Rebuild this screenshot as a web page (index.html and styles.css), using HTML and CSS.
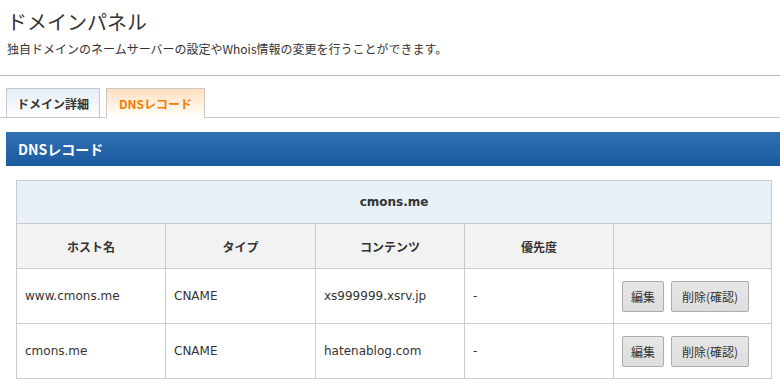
FILE: index.html
```html
<!DOCTYPE html>
<html lang="ja">
<head>
  <meta charset="UTF-8">
  <title>ドメインパネル</title>
  <link rel="stylesheet" href="styles.css">
</head>
<body>
  <div class="cabecera">
    <h1>ドメインパネル</h1>
    <p class="descripcion">独自ドメインのネームサーバーの設定やWhois情報の変更を行うことができます。</p>
  </div>

  <ul class="pestanas">
    <li class="pestana">ドメイン詳細</li>
    <li class="pestana activa">DNSレコード</li>
  </ul>

  <div class="seccion">
    <h2 class="barra">DNSレコード</h2>

    <table class="tabla">
      <colgroup>
        <col class="c1"><col class="c2"><col class="c3"><col class="c4"><col class="c5">
      </colgroup>
      <tr class="dominio">
        <th colspan="5">cmons.me</th>
      </tr>
      <tr class="titulos">
        <th>ホスト名</th>
        <th>タイプ</th>
        <th>コンテンツ</th>
        <th>優先度</th>
        <th></th>
      </tr>
      <tr>
        <td>www.cmons.me</td>
        <td>CNAME</td>
        <td>xs999999.xsrv.jp</td>
        <td>-</td>
        <td><button class="boton">編集</button><button class="boton">削除(確認)</button></td>
      </tr>
      <tr>
        <td>cmons.me</td>
        <td>CNAME</td>
        <td>hatenablog.com</td>
        <td>-</td>
        <td><button class="boton">編集</button><button class="boton">削除(確認)</button></td>
      </tr>
    </table>
  </div>
</body>
</html>
```

FILE: styles.css
```css
body {
  font-family: "DejaVu Sans", "Noto Sans CJK JP", sans-serif;
  margin: 0;
  background-color: #fff;
  color: #333;
  font-size: 12px;
}

.cabecera {
  padding: 10px 7px 17px;
  border-bottom: 1px solid #b9b9b9;
}

h1 {
  font-family: "Noto Sans CJK JP", sans-serif;
  font-size: 20px;
  font-weight: normal;
  line-height: 24px;
  margin: 0 0 6px;
  color: #333;
}

.descripcion {
  font-family: "Noto Sans CJK JP", sans-serif;
  margin: 0;
  line-height: 18px;
  font-size: 12px;
}

.pestanas {
  list-style: none;
  display: flex;
  gap: 6px;
  margin: 12px 0 0;
  padding: 0 0 0 6px;
  border-bottom: 1px solid #c8c8c8;
}

.pestana {
  font-family: "Noto Sans CJK JP", sans-serif;
  font-weight: bold;
  font-size: 12px;
  height: 29px;
  line-height: 29px;
  text-align: center;
  border: 1px solid #c8c8c8;
  border-bottom: none;
  background: linear-gradient(#e5edf8, #fff);
  box-sizing: border-box;
  width: 94px;
  color: #333;
}

.pestana.activa {
  width: 99px;
  height: 30px;
  margin-bottom: -1px;
  color: #f27d00;
  background: linear-gradient(#ffe0bf, #fff);
}

.seccion {
  margin: 14px 0 0 6px;
}

.barra {
  font-family: "Noto Sans CJK JP", sans-serif;
  margin: 0;
  height: 34px;
  line-height: 34px;
  padding-left: 12px;
  font-size: 14px;
  font-weight: bold;
  color: #fff;
  background: linear-gradient(#3170b1, #1b5a9f);
}

.tabla {
  border-collapse: collapse;
  margin: 14px 0 0 10px;
  width: 755px;
  table-layout: fixed;
}

.c1 { width: 149px; }
.c2 { width: 150px; }
.c3 { width: 149px; }
.c4 { width: 149px; }
.c5 { width: 158px; }

.tabla th,
.tabla td {
  border: 1px solid #cbcbcb;
  padding: 0 0 0 8px;
  text-align: left;
  font-weight: normal;
}

.tabla th {
  text-align: center;
  font-weight: bold;
  padding: 0;
}

.dominio th {
  height: 42px;
  background-color: #e8f0f8;
}

.titulos th {
  font-family: "Noto Sans CJK JP", sans-serif;
  height: 44px;
  background-color: #f2f2f2;
}

.tabla td {
  height: 54px;
}

.boton {
  font-family: "Noto Sans CJK JP", sans-serif;
  font-size: 12px;
  color: #333;
  height: 31px;
  padding: 0 8px;
  margin: 0 7px 0 0;
  border: 1px solid #acacac;
  border-radius: 2px;
  background: linear-gradient(#e6e6e6, #dedede);
  vertical-align: middle;
}

.boton + .boton {
  margin: 0;
  padding: 0 10px;
}
```
